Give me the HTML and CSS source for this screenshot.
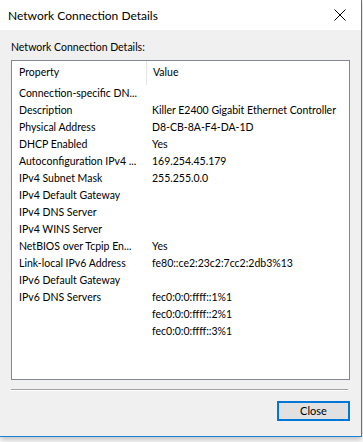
FILE: index.html
```html
<html>
	<head>
		<link rel="stylesheet" href="styles.css">
	</head>
	<body>
		<div class="window">
			<div class="title-bar">
				<span class="title-text">Network Connection Details</span>
				<svg class="close-icon" width="12" height="12" viewBox="0 0 12 12"><path d="M0.5 0.5 L11.5 11.5 M11.5 0.5 L0.5 11.5" stroke="#000" stroke-width="1" fill="none"/></svg>
			</div>
			<div class="dialog-body">
				<p class="group-label">Network Connection Details:</p>
				<div class="list-box">
					<div class="list-header">
						<div class="col-prop">Property</div>
						<div class="col-value">Value</div>
					</div>
					<div class="list-row"><div class="col-prop">Connection-specific DN...</div><div class="col-value"></div></div>
					<div class="list-row"><div class="col-prop">Description</div><div class="col-value">Killer E2400 Gigabit Ethernet Controller</div></div>
					<div class="list-row"><div class="col-prop">Physical Address</div><div class="col-value">D8-CB-8A-F4-DA-1D</div></div>
					<div class="list-row"><div class="col-prop">DHCP Enabled</div><div class="col-value">Yes</div></div>
					<div class="list-row"><div class="col-prop">Autoconfiguration IPv4 ...</div><div class="col-value">169.254.45.179</div></div>
					<div class="list-row"><div class="col-prop">IPv4 Subnet Mask</div><div class="col-value">255.255.0.0</div></div>
					<div class="list-row"><div class="col-prop">IPv4 Default Gateway</div><div class="col-value"></div></div>
					<div class="list-row"><div class="col-prop">IPv4 DNS Server</div><div class="col-value"></div></div>
					<div class="list-row"><div class="col-prop">IPv4 WINS Server</div><div class="col-value"></div></div>
					<div class="list-row"><div class="col-prop">NetBIOS over Tcpip En...</div><div class="col-value">Yes</div></div>
					<div class="list-row"><div class="col-prop">Link-local IPv6 Address</div><div class="col-value">fe80::ce2:23c2:7cc2:2db3%13</div></div>
					<div class="list-row"><div class="col-prop">IPv6 Default Gateway</div><div class="col-value"></div></div>
					<div class="list-row"><div class="col-prop">IPv6 DNS Servers</div><div class="col-value">fec0:0:0:ffff::1%1</div></div>
					<div class="list-row"><div class="col-prop"></div><div class="col-value">fec0:0:0:ffff::2%1</div></div>
					<div class="list-row"><div class="col-prop"></div><div class="col-value">fec0:0:0:ffff::3%1</div></div>
				</div>
				<div class="separator"></div>
				<div class="button-row">
					<button class="close-button">Close</button>
				</div>
			</div>
		</div>
	</body>
</html>
```

FILE: styles.css
```css
html,body{
	margin:0;
	padding:0;
	background:#fff;
}
body{
	font-family:Lato,"Liberation Sans",sans-serif;
	font-size:10.5px;
	color:#000;
}
.window{
	width:361px;
	height:436px;
	border-right:1px solid #1883d7;
	border-bottom:1px solid #1883d7;
	background:#f0f0f0;
	display:flex;
	flex-direction:column;
	box-shadow:0 3px 6px rgba(0,0,0,0.25);
}
.title-bar{
	height:30px;
	background:#fff;
	display:flex;
	align-items:center;
	justify-content:space-between;
	padding:0 15px 0 8px;
	flex-shrink:0;
}
.title-text{
	font-size:12px;
}
.close-icon{
	display:block;
}
.dialog-body{
	flex:1;
	padding:0 11px;
	display:flex;
	flex-direction:column;
}
.group-label{
	margin:10px 0 5px 0;
	line-height:15px;
}
.list-box{
	height:318px;
	border:1px solid #828790;
	background:#fff;
	overflow:hidden;
}
.list-header{
	display:flex;
	height:24px;
}
.list-header .col-prop{
	border-right:1px solid #e5e5e5;
}
.list-header .col-prop,.list-header .col-value{
	line-height:22px;
}
.list-row{
	display:flex;
	height:17px;
	line-height:17px;
}
.col-prop{
	width:127px;
	padding-left:7px;
	white-space:nowrap;
	overflow:hidden;
	flex-shrink:0;
}
.col-value{
	padding-left:6px;
	white-space:nowrap;
}
.separator{
	margin-top:9px;
	margin-right:2px;
	height:1px;
	background:#a0a0a0;
	border-bottom:1px solid #fff;
}
.button-row{
	display:flex;
	justify-content:flex-end;
	margin-top:10px;
}
.close-button{
	width:73px;
	height:20px;
	border:2px solid #0078d7;
	background:#e1e1e1;
	font-family:Lato,"Liberation Sans",sans-serif;
	font-size:11px;
	padding:0;
	line-height:14px;
}
```
